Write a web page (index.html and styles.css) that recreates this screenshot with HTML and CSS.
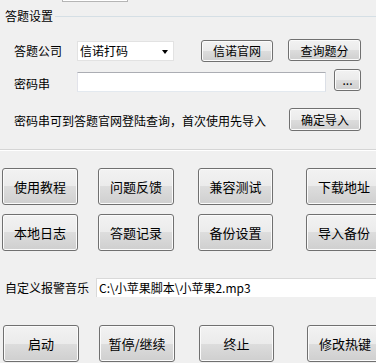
FILE: index.html
```html
<!DOCTYPE html>
<html lang="zh-CN">
<head>
    <meta charset="UTF-8">
    <title>答题设置</title>
    <link rel="stylesheet" href="styles.css">
</head>
<body>
    <div class="topbox"></div>

    <div class="group-title">
        <span>答题设置</span>
        <div class="group-line"></div>
    </div>

    <div class="row row1">
        <div class="label">答题公司</div>
        <div class="select">信诺打码<span class="arrow"></span></div>
        <button class="btn btn-site">信诺官网</button>
        <button class="btn btn-query">查询题分</button>
    </div>

    <div class="row row2">
        <div class="label">密码串</div>
        <div class="textbox"></div>
        <button class="btn btn-dots">...</button>
    </div>

    <div class="row row3">
        <div class="hint">密码串可到答题官网登陆查询，首次使用先导入</div>
        <button class="btn btn-import">确定导入</button>
    </div>

    <div class="separator"></div>

    <div class="btn-grid">
        <button class="btn big">使用教程</button>
        <button class="btn big">问题反馈</button>
        <button class="btn big narrow">兼容测试</button>
        <button class="btn big">下载地址</button>
        <button class="btn big">本地日志</button>
        <button class="btn big">答题记录</button>
        <button class="btn big narrow">备份设置</button>
        <button class="btn big">导入备份</button>
    </div>

    <div class="alarm">
        <div class="alarm-label">自定义报警音乐</div>
        <div class="alarm-path">C:\小苹果脚本\小苹果2.mp3</div>
    </div>

    <div class="btn-grid bottom">
        <button class="btn big">启动</button>
        <button class="btn big">暂停/继续</button>
        <button class="btn big narrow">终止</button>
        <button class="btn big">修改热键</button>
    </div>
</body>
</html>
```

FILE: styles.css
```css
* {
    margin: 0;
    padding: 0;
    box-sizing: border-box;
}

body {
    width: 376px;
    height: 363px;
    overflow: hidden;
    background: #f0f0f0;
    color: #000;
    font-family: 'Noto Sans CJK SC', 'DejaVu Sans', sans-serif;
    font-size: 12px;
}

.topbox {
    margin-left: 62px;
    width: 66px;
    height: 2px;
    background: #fff;
    border: 1px solid #b5b5b5;
    border-top: none;
}

.group-title {
    display: flex;
    align-items: center;
    margin-top: 7px;
    padding-left: 5px;
    height: 14px;
    line-height: 14px;
}

.group-line {
    flex: 1;
    height: 1px;
    margin-left: 2px;
    background: #d5dfe5;
}

.row {
    display: flex;
    align-items: center;
    padding-left: 14px;
    height: 23px;
}

.row1 {
    margin-top: 16px;
}

.row2 {
    margin-top: 7px;
    align-items: flex-end;
}

.row3 {
    margin-top: 16px;
}

.label {
    width: 63px;
}

.select {
    position: relative;
    width: 97px;
    height: 20px;
    line-height: 18px;
    padding-left: 2px;
    background: #fff;
    border: 1px solid #e2e2e2;
}

.arrow {
    position: absolute;
    right: 5px;
    top: 8px;
    border-left: 3px solid transparent;
    border-right: 3px solid transparent;
    border-top: 4px solid #000;
}

.btn {
    font-family: inherit;
    font-size: 12px;
    color: #000;
    border: 1px solid #707070;
    border-radius: 3px;
    background: linear-gradient(#f2f2f2 0%, #ebebeb 50%, #dddddd 50%, #cfcfcf 100%);
    box-shadow: inset 0 0 0 1px #fbfbfb;
    height: 22px;
}

.btn-site {
    width: 72px;
    margin-left: 27px;
}

.btn-query {
    width: 73px;
    margin-left: 15px;
    align-self: flex-start;
}

.textbox {
    width: 249px;
    height: 20px;
    background: #fff;
    border: 1px solid;
    border-color: #abadb3 #dbdfe6 #e3e9ef #e2e3ea;
}

.btn-dots {
    width: 27px;
    height: 22px;
    margin-left: 8px;
    margin-bottom: 1px;
    line-height: 12px;
}

.hint {
    flex: 1;
    padding-top: 2px;
}

.btn-import {
    width: 72px;
    height: 23px;
    margin-right: 15px;
}

.separator {
    margin-top: 18px;
    height: 2px;
    border-top: 1px solid #d5d5d5;
    border-bottom: 1px solid #fff;
}

.btn-grid {
    display: grid;
    grid-template-columns: 96px 100px 108px 76px;
    row-gap: 9px;
    margin-top: 17px;
    padding-left: 2px;
}

.big {
    width: 76px;
    height: 37px;
    font-size: 13px;
}

.narrow {
    width: 75px;
}

.alarm {
    display: flex;
    align-items: center;
    margin-top: 27px;
    height: 19px;
    padding-left: 5px;
}

.alarm-label {
    width: 91px;
}

.alarm-path {
    flex: 1;
    height: 19px;
    line-height: 18px;
    padding-left: 2px;
    background: #fff;
    border-top: 1px solid #d9d9d9;
    border-left: 1px solid #d9d9d9;
}

.bottom {
    margin-top: 28px;
    padding-left: 3px;
}
```
